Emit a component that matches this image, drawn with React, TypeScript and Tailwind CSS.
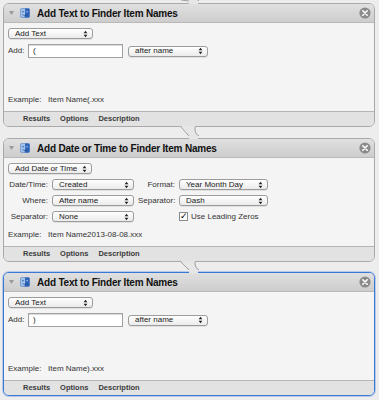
import React from "react";

const font = { fontFamily: '"Liberation Sans", Arial, sans-serif' };

const Arrows = () => (
    <svg width="5" height="8" viewBox="0 0 5 8" className="shrink-0">
        <path d="M0.6 3.2 L2.5 0.8 L4.4 3.2 Z" fill="#222" />
        <path d="M0.6 4.8 L2.5 7.2 L4.4 4.8 Z" fill="#222" />
    </svg>
);

const Select = ({ label, className = "" }: { label: string; className?: string }) => (
    <div
        className={`flex h-[11px] items-center justify-between whitespace-nowrap rounded-[3px] border border-[#9c9c9c] bg-gradient-to-b from-white to-[#ebebeb] pl-[6px] pr-[4px] text-[8px] leading-none text-[#1a1a1a] shadow-[0_1px_0_rgba(0,0,0,0.08)] ${className}`}
    >
        <span>{label}</span>
        <Arrows />
    </div>
);

const FinderIcon = () => (
    <svg width="10" height="10" viewBox="0 0 11 11" className="shrink-0">
        <rect x="0.5" y="0.5" width="10" height="10" rx="1.5" fill="#9fc3ee" stroke="#4b76b8" strokeWidth="0.6" />
        <path d="M5.5 0.5 L9 0.5 Q10.5 0.5 10.5 2 L10.5 9 Q10.5 10.5 9 10.5 L5 10.5 Q6.3 5.5 5.5 0.5 Z" fill="#2f63b8" />
        <circle cx="3.3" cy="4" r="0.7" fill="#1f3f7a" />
        <circle cx="7.8" cy="4" r="0.7" fill="#cfe1fa" />
        <path d="M2.5 7.4 Q5.5 9 8.6 7.4" stroke="#1f3f7a" strokeWidth="0.6" fill="none" />
    </svg>
);

const CloseButton = () => (
    <svg width="12" height="12" viewBox="0 0 12 12" className="shrink-0">
        <circle cx="6" cy="6" r="5.6" fill="#8b8b8b" />
        <path d="M3.8 3.8 L8.2 8.2 M8.2 3.8 L3.8 8.2" stroke="#fff" strokeWidth="1.6" strokeLinecap="round" />
    </svg>
);

const Card = ({
    title,
    example,
    selected,
    children,
}: {
    title: string;
    example: string;
    selected?: boolean;
    children: React.ReactNode;
}) => (
    <div
        className={`flex h-[124px] flex-col overflow-hidden rounded-[6px] border bg-[#f4f4f4] ${
            selected ? "border-[#3a78d6] shadow-[0_0_0_1px_rgba(58,120,214,0.3)]" : "border-[#a9a9a9]"
        }`}
    >
        <div className="flex h-[19px] shrink-0 items-center border-b border-[#b9b9b9] bg-gradient-to-b from-[#e0e0e0] to-[#cdcdcd] pl-[5px] pr-[3px]">
            <svg width="5" height="4" viewBox="0 0 5 4" className="mr-[6px] shrink-0">
                <path d="M0 0 L5 0 L2.5 4 Z" fill="#9a9a9a" />
            </svg>
            <FinderIcon />
            <span className="ml-[7px] flex-1 text-[10px] font-bold tracking-[-0.2px] text-[#111]">{title}</span>
            <CloseButton />
        </div>
        <div className="flex flex-1 flex-col px-[4px] pt-[5px] pb-[5px]">
            {children}
            <div className="mt-auto flex text-[8px] text-[#333]">
                <span className="w-[40px]">Example:</span>
                <span>{example}</span>
            </div>
        </div>
        <div className="flex h-[15px] shrink-0 items-center gap-[10px] border-t border-[#b5b5b5] bg-[#e2e2e2] pl-[19px] text-[7.5px] font-bold text-[#3a3a3a]">
            <span>Results</span>
            <span>Options</span>
            <span>Description</span>
        </div>
    </div>
);

const Connector = ({ height }: { height: number }) => (
    <div className="relative" style={{ height }}>
        <svg width="379" height={height + 2} viewBox={`0 0 379 ${height + 2}`} className="absolute -top-px left-[-3px]">
            <path
                d={`M181 0 L189 ${height - 1} L189 ${height + 2} L198 ${height + 2} L198 ${height - 2} Q195 ${height - 4} 195 ${height - 7} L195 0 Z`}
                fill="#e6e6e6"
            />
            <path d={`M181 1 L189 ${height - 1}`} stroke="#9f9f9f" strokeWidth="1" fill="none" />
            <path d={`M195 1 L195 ${height - 7} Q195 ${height - 3} 199 ${height - 1}`} stroke="#9f9f9f" strokeWidth="1" fill="none" />
        </svg>
    </div>
);

const AddTextBody = ({ value }: { value: string }) => (
    <div className="flex flex-col gap-[5px]">
        <Select label="Add Text" className="w-[85px]" />
        <div className="flex items-center">
            <span className="w-[20px] text-[8px] text-[#333]">Add:</span>
            <div className="flex h-[14px] w-[95px] items-center border border-[#a0a0a0] bg-white pl-[4px] text-[8px] text-[#222] shadow-[inset_0_1px_1px_rgba(0,0,0,0.15)]">
                {value}
            </div>
            <Select label="after name" className="ml-[5px] w-[80px]" />
        </div>
    </div>
);

const App = () => {
    return (
        <div className="h-[400px] w-[379px] overflow-hidden bg-[#ededed] pl-[3px] pr-[4px]" style={font}>
            <Connector height={3} />
            <Card title="Add Text to Finder Item Names" example="Item Name(.xxx">
                <AddTextBody value="(" />
            </Card>
            <Connector height={11} />
            <Card title="Add Date or Time to Finder Item Names" example="Item Name2013-08-08.xxx">
                <div className="flex flex-col">
                    <Select label="Add Date or Time" className="w-[84px]" />
                    <div className="mt-[5px] grid grid-cols-[40px_82px_37px_89px] items-center gap-x-[4px] gap-y-[5px] text-[8px] leading-[11px] text-[#333]">
                        <span className="text-right">Date/Time:</span>
                        <Select label="Created" />
                        <span className="text-right">Format:</span>
                        <Select label="Year Month Day" />
                        <span className="text-right">Where:</span>
                        <Select label="After name" />
                        <span className="text-right">Separator:</span>
                        <Select label="Dash" />
                        <span className="text-right">Separator:</span>
                        <Select label="None" />
                        <span />
                        <div className="flex items-center gap-[3px]">
                            <span className="flex h-[9px] w-[9px] items-center justify-center border border-[#8c8c8c] bg-white text-[9px] leading-none text-black">
                                ✓
                            </span>
                            <span>Use Leading Zeros</span>
                        </div>
                    </div>
                </div>
            </Card>
            <Connector height={10} />
            <Card title="Add Text to Finder Item Names" example="Item Name).xxx" selected>
                <AddTextBody value=")" />
            </Card>
        </div>
    );
};

export default App;
